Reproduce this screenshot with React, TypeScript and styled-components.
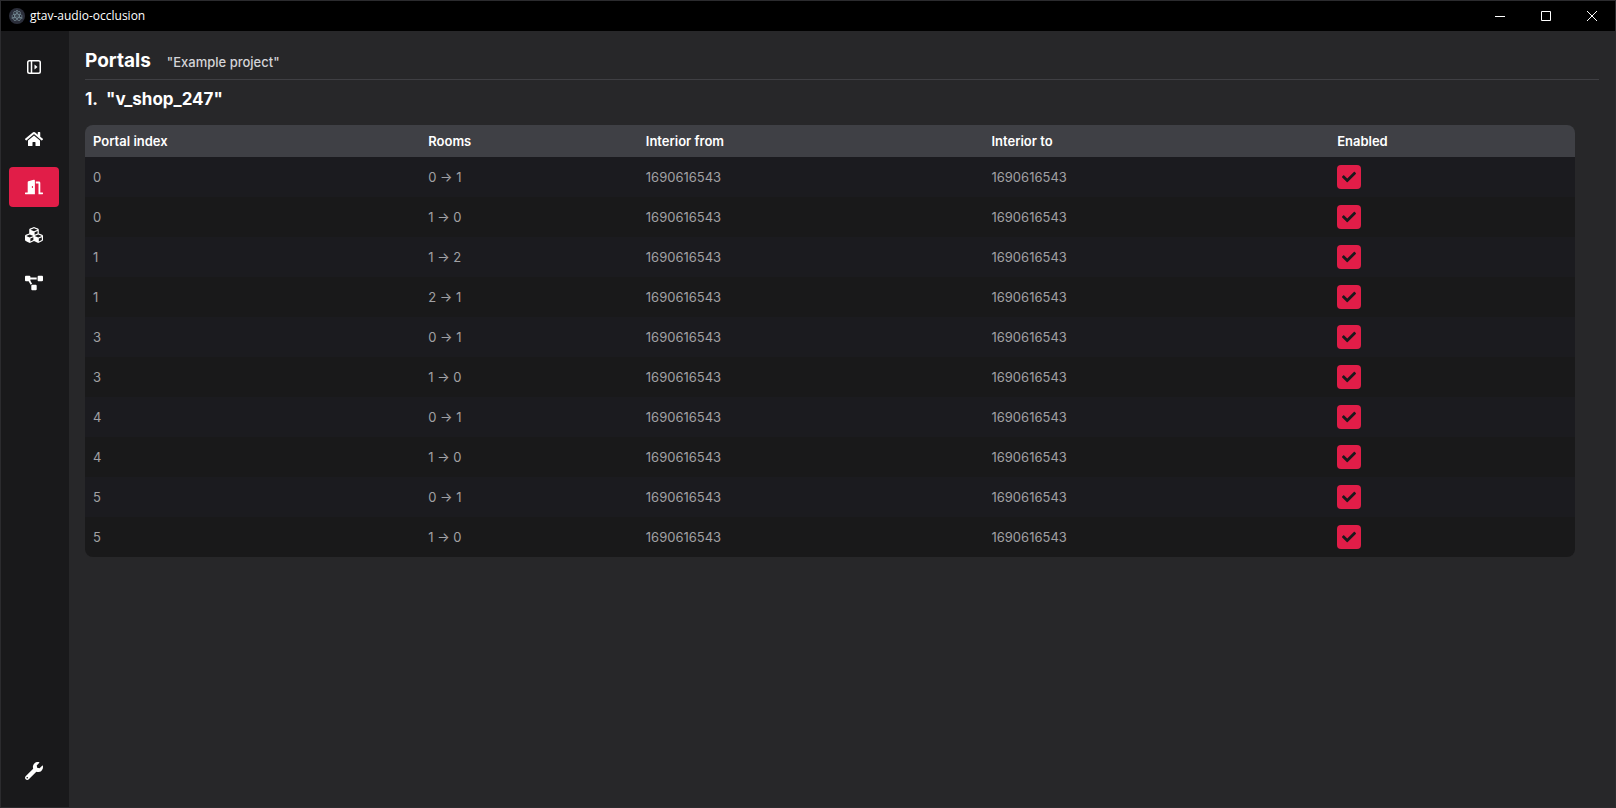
import React, { useState } from "react";
import styled, { createGlobalStyle } from "styled-components";
import { FaCheck, FaHome, FaDoorOpen, FaCubes, FaProjectDiagram, FaWrench } from "react-icons/fa";

const GlobalStyle = createGlobalStyle`
  *, *::before, *::after { box-sizing: border-box; }
  body { margin: 0; background: #272729; }
  h1, h2, p { margin: 0; }
  button { border: 0; padding: 0; background: none; color: inherit; font: inherit; cursor: pointer; }
`;

const Window = styled.div`
  display: flex;
  flex-direction: column;
  min-height: 100vh;
  border: 1px solid #2b2b2e;
  background: #272729;
  color: #fff;
  font-family: Inter, "Liberation Sans", sans-serif;
  font-size: 13px;
  line-height: 20px;
`;

const TitleBar = styled.header`
  display: flex;
  align-items: center;
  height: 30px;
  padding-left: 8px;
  background: #000;
`;

const AppName = styled.span`
  flex: 1;
  padding-left: 5px;
  font-family: "Open Sans", "Noto Sans", sans-serif;
  font-size: 12px;
`;

const CaptionButton = styled.button`
  display: grid;
  place-items: center;
  width: 46px;
  height: 30px;
`;

const Body = styled.div`
  display: flex;
  flex: 1;
`;

const Sidebar = styled.nav`
  display: flex;
  flex-direction: column;
  gap: 32px;
  padding: 16px 10px 16px 8px;
  background: #19191b;
`;

const NavGroup = styled.div`
  display: flex;
  flex-direction: column;
  flex: 1;
  gap: 8px;
`;

const NavButton = styled.button<{ $active?: boolean }>`
  display: grid;
  place-items: center;
  width: 50px;
  height: 40px;
  border-radius: 4px;
  background: ${(p) => (p.$active ? "#e11d48" : "transparent")};
  font-size: 18px;
`;

const Main = styled.main`
  flex: 1;
  min-width: 0;
  padding: 14px 16px;
`;

const PageHeader = styled.div`
  display: flex;
  align-items: baseline;
  gap: 16px;
  padding-bottom: 2px;
  border-bottom: 1px solid #3f3f43;
`;

const PageTitle = styled.h1`
  font-size: 19px;
  font-weight: 700;
  line-height: 32px;
`;

const ProjectName = styled.p`
  color: #d4d4d8;
  font-weight: 500;
`;

const Section = styled.section`
  padding: 5px 24px 0 0;
`;

const SectionTitle = styled.h2`
  display: flex;
  gap: 8px;
  margin-bottom: 12px;
  font-size: 17px;
  font-weight: 700;
  line-height: 28px;
`;

const Table = styled.table`
  width: 100%;
  table-layout: fixed;
  border-spacing: 0;
  border-radius: 8px;
  overflow: hidden;
  text-align: left;
`;

const Column = styled.col<{ $share: number }>`
  width: ${(p) => p.$share}%;
`;

const HeadCell = styled.th`
  height: 32px;
  padding: 0 8px;
  background: #3f4045;
  font-size: 13px;
  font-weight: 600;
`;

const Row = styled.tr`
  background: #19191a;
  &:nth-child(odd) { background: #1b1b1f; }
`;

const Cell = styled.td`
  height: 40px;
  padding: 0 8px;
  color: #a1a1a4;
`;

const CheckLabel = styled.label`
  display: grid;
  place-items: center;
  width: 24px;
  height: 24px;
  color: #19191b;
  cursor: pointer;
  & > * { grid-area: 1 / 1; }
  & > svg { pointer-events: none; }
`;

const CheckInput = styled.input`
  appearance: none;
  width: 24px;
  height: 24px;
  margin: 0;
  border-radius: 4px;
  background: #3f4045;
  cursor: pointer;
  &:checked { background: #e11d48; }
`;

const AppLogo = () => (
  <svg width="16" height="16" viewBox="0 0 32 32" aria-hidden="true">
    <circle cx="16" cy="16" r="16" fill="#2b2e3a" />
    <g fill="none" stroke="#a3c4cc" strokeOpacity="0.65" strokeWidth="1.3">
      <ellipse cx="16" cy="16" rx="10.5" ry="4" />
      <ellipse cx="16" cy="16" rx="10.5" ry="4" transform="rotate(60 16 16)" />
      <ellipse cx="16" cy="16" rx="10.5" ry="4" transform="rotate(120 16 16)" />
    </g>
    <g fill="#a3c4cc" fillOpacity="0.8">
      <circle cx="16" cy="16" r="1.2" />
      <circle cx="6.5" cy="20" r="1.4" />
      <circle cx="25.5" cy="20" r="1.4" />
      <circle cx="16" cy="5.5" r="1.4" />
    </g>
  </svg>
);

const ExpandIcon = () => (
  <svg width="14" height="14" viewBox="0 0 14 14" fill="none" stroke="currentColor" strokeWidth="1.5" aria-hidden="true">
    <rect x="0.75" y="0.75" width="12.5" height="12.5" rx="1.75" />
    <path d="M4.5 1v12" />
    <path d="M7.5 4.5v5L10.5 7z" fill="currentColor" stroke="none" />
  </svg>
);

const NAV = [
  { label: "Home", icon: FaHome },
  { label: "Portals", icon: FaDoorOpen },
  { label: "Rooms", icon: FaCubes },
  { label: "Nodes", icon: FaProjectDiagram },
];

const HASH = "1690616543";
const PORTALS = [
  { index: 0, from: 0, to: 1 },
  { index: 0, from: 1, to: 0 },
  { index: 1, from: 1, to: 2 },
  { index: 1, from: 2, to: 1 },
  { index: 3, from: 0, to: 1 },
  { index: 3, from: 1, to: 0 },
  { index: 4, from: 0, to: 1 },
  { index: 4, from: 1, to: 0 },
  { index: 5, from: 0, to: 1 },
  { index: 5, from: 1, to: 0 },
];

const COLUMNS = [
  { title: "Portal index", share: 22.5 },
  { title: "Rooms", share: 14.6 },
  { title: "Interior from", share: 23.2 },
  { title: "Interior to", share: 23.2 },
  { title: "Enabled", share: 16.5 },
];

function EnabledBox({ label }: { label: string }) {
  const [checked, setChecked] = useState(true);
  return (
    <CheckLabel>
      <CheckInput
        type="checkbox"
        aria-label={label}
        checked={checked}
        onChange={(e) => setChecked(e.target.checked)}
      />
      {checked && <FaCheck size={14} />}
    </CheckLabel>
  );
}

export default function App() {
  const [page, setPage] = useState("Portals");
  return (
    <Window>
      <GlobalStyle />
      <TitleBar>
        <AppLogo />
        <AppName>gtav-audio-occlusion</AppName>
        <CaptionButton aria-label="Minimize">
          <svg width="10" height="10" fill="#fff"><path d="M0 5h10v1H0z" /></svg>
        </CaptionButton>
        <CaptionButton aria-label="Maximize">
          <svg width="10" height="10" fill="none" stroke="#fff"><path d="M.5.5h9v9h-9z" /></svg>
        </CaptionButton>
        <CaptionButton aria-label="Close">
          <svg width="10" height="10" fill="none" stroke="#fff"><path d="M0 0l10 10M10 0L0 10" /></svg>
        </CaptionButton>
      </TitleBar>
      <Body>
        <Sidebar>
          <NavButton aria-label="Expand sidebar"><ExpandIcon /></NavButton>
          <NavGroup>
            {NAV.map(({ label, icon: Icon }) => (
              <NavButton key={label} aria-label={label} $active={page === label} onClick={() => setPage(label)}>
                <Icon />
              </NavButton>
            ))}
          </NavGroup>
          <NavButton aria-label="Settings"><FaWrench /></NavButton>
        </Sidebar>
        <Main>
          <PageHeader>
            <PageTitle>Portals</PageTitle>
            <ProjectName>"Example project"</ProjectName>
          </PageHeader>
          <Section>
            <SectionTitle><span>1.</span><span>"v_shop_247"</span></SectionTitle>
            <Table>
              <colgroup>
                {COLUMNS.map((c) => <Column key={c.title} $share={c.share} />)}
              </colgroup>
              <thead>
                <tr>{COLUMNS.map((c) => <HeadCell key={c.title} scope="col">{c.title}</HeadCell>)}</tr>
              </thead>
              <tbody>
                {PORTALS.map((p, i) => (
                  <Row key={i}>
                    <Cell>{p.index}</Cell>
                    <Cell>{`${p.from} -> ${p.to}`}</Cell>
                    <Cell>{HASH}</Cell>
                    <Cell>{HASH}</Cell>
                    <Cell><EnabledBox label={`Portal ${p.index}, room ${p.from} to ${p.to}`} /></Cell>
                  </Row>
                ))}
              </tbody>
            </Table>
          </Section>
        </Main>
      </Body>
    </Window>
  );
}
